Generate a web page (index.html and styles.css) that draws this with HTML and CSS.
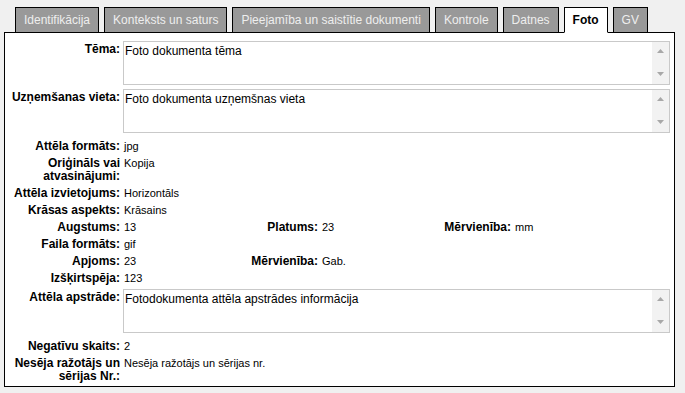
FILE: index.html
```html
<!DOCTYPE html>
<html lang="lv">
<head>
    <meta charset="UTF-8">
    <title>Foto</title>
    <link rel="stylesheet" href="styles.css">
</head>
<body>
    <!-- Cilnes -->
    <div class="tabs">
        <div class="tab">Identifikācija</div>
        <div class="tab">Konteksts un saturs</div>
        <div class="tab">Pieejamība un saistītie dokumenti</div>
        <div class="tab">Kontrole</div>
        <div class="tab">Datnes</div>
        <div class="tab active">Foto</div>
        <div class="tab">GV</div>
    </div>

    <div class="panel">
        <div class="row memo-row">
            <span class="lbl">Tēma:</span>
            <div class="memo wide">
                <textarea readonly>Foto dokumenta tēma</textarea>
                <div class="sb">
                    <svg width="7" height="4"><path d="M0 4 L3.5 0 L7 4Z" fill="#a8a8a8"/></svg>
                    <svg width="7" height="4"><path d="M0 0 L3.5 4 L7 0Z" fill="#a8a8a8"/></svg>
                </div>
            </div>
        </div>
        <div class="row memo-row">
            <span class="lbl">Uzņemšanas vieta:</span>
            <div class="memo wide">
                <textarea readonly>Foto dokumenta uzņemšnas vieta</textarea>
                <div class="sb">
                    <svg width="7" height="4"><path d="M0 4 L3.5 0 L7 4Z" fill="#a8a8a8"/></svg>
                    <svg width="7" height="4"><path d="M0 0 L3.5 4 L7 0Z" fill="#a8a8a8"/></svg>
                </div>
            </div>
        </div>
        <div class="row">
            <span class="lbl">Attēla formāts:</span>
            <span class="val wide">jpg</span>
        </div>
        <div class="row">
            <span class="lbl">Oriģināls vai atvasinājumi:</span>
            <span class="val wide">Kopija</span>
        </div>
        <div class="row">
            <span class="lbl">Attēla izvietojums:</span>
            <span class="val wide">Horizontāls</span>
        </div>
        <div class="row">
            <span class="lbl">Krāsas aspekts:</span>
            <span class="val wide">Krāsains</span>
        </div>
        <div class="row">
            <span class="lbl">Augstums:</span>
            <span class="val">13</span>
            <span class="lbl">Platums:</span>
            <span class="val">23</span>
            <span class="lbl">Mērvienība:</span>
            <span class="val">mm</span>
        </div>
        <div class="row">
            <span class="lbl">Faila formāts:</span>
            <span class="val wide">gif</span>
        </div>
        <div class="row">
            <span class="lbl">Apjoms:</span>
            <span class="val">23</span>
            <span class="lbl">Mērvienība:</span>
            <span class="val">Gab.</span>
        </div>
        <div class="row">
            <span class="lbl">Izšķirtspēja:</span>
            <span class="val wide">123</span>
        </div>
        <div class="row memo-row">
            <span class="lbl">Attēla apstrāde:</span>
            <div class="memo wide">
                <textarea readonly>Fotodokumenta attēla apstrādes informācija</textarea>
                <div class="sb">
                    <svg width="7" height="4"><path d="M0 4 L3.5 0 L7 4Z" fill="#a8a8a8"/></svg>
                    <svg width="7" height="4"><path d="M0 0 L3.5 4 L7 0Z" fill="#a8a8a8"/></svg>
                </div>
            </div>
        </div>
        <div class="row">
            <span class="lbl">Negatīvu skaits:</span>
            <span class="val wide">2</span>
        </div>
        <div class="row">
            <span class="lbl">Nesēja ražotājs un sērijas Nr.:</span>
            <span class="val wide">Nesēja ražotājs un sērijas nr.</span>
        </div>
    </div>
</body>
</html>
```

FILE: styles.css
```css
body {
    margin: 0;
    padding: 7px 10px 0 4px;
    background-color: #f0f0f0;
    font-family: "Liberation Sans", Arial, sans-serif;
    color: #000;
}

/* cilnes */
.tabs {
    display: flex;
    gap: 5px;
    padding-left: 11px;
    height: 26px;
}
.tab {
    box-sizing: border-box;
    height: 26px;
    padding: 0 8px;
    border: 1px solid #000;
    background-color: #999;
    color: #eee;
    font-size: 12px;
    line-height: 24px;
}
.tab.active {
    position: relative;
    z-index: 1;
    background-color: #fff;
    border-bottom-color: #fff;
    color: #000;
    font-weight: bold;
}

/* forma */
.panel {
    box-sizing: border-box;
    width: 671px;
    height: 355px;
    margin-top: -1px;
    padding: 6px 4px 0 0;
    border: 1px solid #000;
    background-color: #fff;
}
.row {
    display: grid;
    grid-template-columns: 115px 100px 90px 100px 85px 1fr;
    column-gap: 4px;
    align-items: baseline;
    padding: 2px 0;
    line-height: 13px;
}
.memo-row {
    align-items: start;
}
.memo-row + .row:not(.memo-row) {
    margin-top: 3px;
}
.memo-row .lbl {
    padding-top: 2px;
}
.lbl {
    font-size: 12px;
    font-weight: bold;
    text-align: right;
}
.val {
    font-size: 11px;
}
.wide {
    grid-column: 2 / -1;
}

.memo {
    display: flex;
    box-sizing: border-box;
    height: 44px;
    margin-left: -1px;
    border: 1px solid #c9c9c9;
}
.memo textarea {
    flex: 1;
    margin: 0;
    padding: 2px 1px;
    border: none;
    outline: none;
    resize: none;
    overflow: hidden;
    font-family: "Liberation Sans", Arial, sans-serif;
    font-size: 12px;
    color: #000;
}
.sb {
    width: 17px;
    display: flex;
    flex-direction: column;
    justify-content: space-between;
    align-items: center;
    padding: 7px 0 8px;
    box-sizing: border-box;
    background-color: #f2f2f2;
}
.sb svg {
    display: block;
}
```
